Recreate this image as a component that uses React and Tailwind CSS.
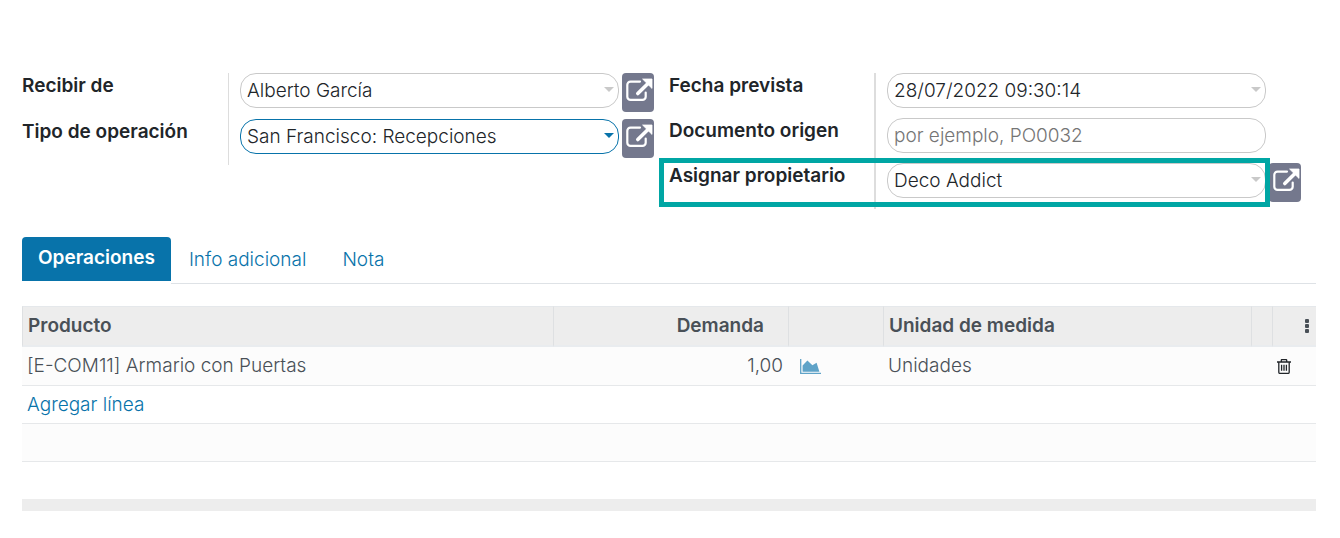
import { useState } from "react";

function Caret({ active }) {
  return (
    <svg
      viewBox="0 0 10 5"
      aria-hidden="true"
      className={
        "pointer-events-none absolute right-[5px] top-3.5 h-[5px] w-2.5 " +
        (active ? "fill-[#0873aa]" : "fill-[#c9c9c9]")
      }
    >
      <path d="M0 0h10L5 5z" />
    </svg>
  );
}

function OpenButton({ label }) {
  return (
    <button type="button" aria-label={label} className="block h-[39px] w-8 rounded-sm bg-[#74788d]">
      <svg viewBox="0 0 32 39" className="h-[39px] w-8" aria-hidden="true">
        <path
          d="M18 8.6H8.5a3.2 3.2 0 0 0-3.2 3.2v11.9a3.2 3.2 0 0 0 3.2 3.2h12a3.2 3.2 0 0 0 3.2-3.2v-4.2"
          fill="none"
          stroke="#fff"
          strokeWidth="2.2"
          strokeLinecap="round"
        />
        <path d="M15.8 20.6 26 10.4" stroke="#fff" strokeWidth="3.6" strokeLinecap="round" />
        <path d="M20.6 6H30v9.4z" fill="#fff" stroke="#fff" strokeWidth="0.8" strokeLinejoin="round" />
      </svg>
    </button>
  );
}

const control =
  "block h-[35px] w-full appearance-none rounded-2xl border bg-white px-1.5 text-[19px] leading-6 font-light text-[#212529] outline-none placeholder:text-[#757575] ";

const dividers = {
  thin: { label: "w-[206px]", line: "border-l" },
  thick: { label: "w-[205px]", line: "border-l-2" },
};

function Row({ id, label, kind, value, placeholder, active, open, highlight, divider }) {
  const [current, setCurrent] = useState(value);
  const style = control + (active ? "border-[#0873aa]" : "border-[#c9c9c9]");
  const { label: labelWidth, line } = dividers[divider];
  return (
    <div className="relative flex">
      <label htmlFor={id} className={"shrink-0 pt-px text-[19px] leading-6 font-semibold text-[#212529] " + labelWidth}>
        {label}
      </label>
      <div className={"flex min-w-0 flex-1 gap-[3px] border-[#dddddd] pl-[11px] " + line + (open ? " pb-[7px]" : " pb-2.5")}>
        <div className="relative h-[35px] min-w-0 flex-1">
          {kind === "select" ? (
            <select id={id} defaultValue={value} className={style}>
              <option>{value}</option>
            </select>
          ) : (
            <input
              id={id}
              type="text"
              value={current}
              placeholder={placeholder}
              onChange={(e) => setCurrent(e.target.value)}
              className={style}
            />
          )}
          {kind !== "text" && <Caret active={active} />}
        </div>
        <div className="w-[47px] shrink-0">{open && <OpenButton label={"Abrir " + label} />}</div>
      </div>
      {highlight && (
        <div className="pointer-events-none absolute -top-[5px] right-[46px] -left-2.5 h-[49px] border-5 border-[#00a6a4]" />
      )}
    </div>
  );
}

const head = "border-l border-[#dee0e2] px-[5px] font-semibold";

export default function App() {
  return (
    <main className="bg-white pt-[73px] pr-6 pb-7 pl-[22px] font-['Inter',sans-serif] text-[19px] leading-6 font-light">
      <form className="grid grid-cols-2 items-start">
        <div>
          <Row id="partner" label="Recibir de" kind="select" value="Alberto García" open divider="thin" />
          <Row id="type" label="Tipo de operación" kind="select" value="San Francisco: Recepciones" active open divider="thin" />
        </div>
        <div>
          <Row id="date" label="Fecha prevista" kind="date" value="28/07/2022 09:30:14" divider="thick" />
          <Row id="origin" label="Documento origen" kind="text" value="" placeholder="por ejemplo, PO0032" divider="thick" />
          <Row id="owner" label="Asignar propietario" kind="select" value="Deco Addict" open highlight divider="thick" />
        </div>
      </form>

      <nav className="mt-7 flex">
        <a href="#operaciones" className="h-11 rounded-t-sm bg-[#0873aa] px-4 pt-[9px] font-semibold text-white">
          Operaciones
        </a>
        <div className="flex h-[47px] flex-1 gap-9 border-b border-[#dee2e6] px-[18px] pt-[11px] text-[#0873aa]">
          <a href="#info">Info adicional</a>
          <a href="#nota">Nota</a>
        </div>
      </nav>

      <table className="mt-[22px] w-full table-fixed border-separate border-spacing-0 text-left text-[#495057]">
        <colgroup>
          <col />
          <col className="w-[235px]" />
          <col className="w-[95px]" />
          <col className="w-[368px]" />
          <col className="w-[21px]" />
          <col className="w-11" />
        </colgroup>
        <thead className="bg-[#ededed]">
          <tr className="h-[41px] *:border-t *:border-b-2 *:border-t-[#e5e8eb] *:border-b-[#e9ecef]">
            <th className={head}>Producto</th>
            <th className="border-l border-[#dee0e2] pr-6 text-right font-semibold">Demanda</th>
            <th className={head} />
            <th className={head}>Unidad de medida</th>
            <th className={head} />
            <th className={head}>
              <button type="button" aria-label="Columnas" className="ml-auto block pr-0.5">
                <svg viewBox="0 0 4 14" className="h-3.5 w-1 fill-[#495057]" aria-hidden="true">
                  <rect width="4" height="4" rx="1" />
                  <rect y="5" width="4" height="4" rx="1" />
                  <rect y="10" width="4" height="4" rx="1" />
                </svg>
              </button>
            </th>
          </tr>
        </thead>
        <tbody>
          <tr className="h-[39px] bg-[#fcfcfc] *:border-b *:border-[#e6e8ea]">
            <td className="px-[5px]">[E-COM11] Armario con Puertas</td>
            <td className="px-[5px] text-right">1,00</td>
            <td className="px-3">
              <button type="button" aria-label="Previsión" className="block">
                <svg viewBox="0 0 21 15" className="h-[15px] w-[21px]" aria-hidden="true">
                  <path d="M.7 0v14.3H21" fill="none" stroke="#5fa3c8" strokeWidth="1.3" />
                  <path d="M2.6 12.8V6.4L7.4 1.4l5 4.8 4.2-2.4 2.8 9z" fill="#5fa3c8" />
                </svg>
              </button>
            </td>
            <td className="px-[5px]">Unidades</td>
            <td />
            <td className="px-[5px]">
              <button type="button" aria-label="Eliminar" className="block">
                <svg viewBox="0 0 14 15" className="h-[15px] w-3.5" fill="none" stroke="#212529" strokeWidth="1.3" aria-hidden="true">
                  <path d="M0 3h14M4.3 3V1.2q0-.6.6-.6h4.2q.6 0 .6.6V3M1.8 3v10.2q0 1.2 1.2 1.2h8q1.2 0 1.2-1.2V3M4.6 5.8v6M7 5.8v6M9.4 5.8v6" />
                </svg>
              </button>
            </td>
          </tr>
          <tr className="h-[38px] *:border-b *:border-[#e6e8ea]">
            <td colSpan={6} className="px-[5px]">
              <a href="#agregar" className="text-[#0873aa]">Agregar línea</a>
            </td>
          </tr>
          <tr className="h-[38px] bg-[#fcfcfc] *:border-b *:border-[#e6e8ea]">
            <td colSpan={6} />
          </tr>
          <tr className="h-[37px]">
            <td colSpan={6} />
          </tr>
        </tbody>
        <tfoot>
          <tr className="h-3 bg-[#ededed]">
            <td colSpan={6} />
          </tr>
        </tfoot>
      </table>
    </main>
  );
}
